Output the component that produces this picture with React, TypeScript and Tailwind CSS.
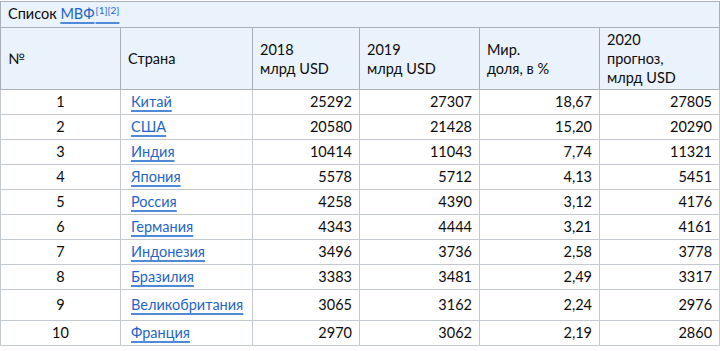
import React from "react";

const rows: [number, string, string, string, string, string][] = [
  [1, "Китай", "25292", "27307", "18,67", "27805"],
  [2, "США", "20580", "21428", "15,20", "20290"],
  [3, "Индия", "10414", "11043", "7,74", "11321"],
  [4, "Япония", "5578", "5712", "4,13", "5451"],
  [5, "Россия", "4258", "4390", "3,12", "4176"],
  [6, "Германия", "4343", "4444", "3,21", "4161"],
  [7, "Индонезия", "3496", "3736", "2,58", "3778"],
  [8, "Бразилия", "3383", "3481", "2,49", "3317"],
  [9, "Великобритания", "3065", "3162", "2,24", "2976"],
  [10, "Франция", "2970", "3062", "2,19", "2860"],
];

const link =
  "text-[#1f66c9] underline decoration-[#4f8ad9] decoration-2 underline-offset-[3px]";

export default function App() {
  return (
    <div className="w-[720px] h-[351px] bg-white font-['Lato','Open_Sans',sans-serif] text-[14.5px] text-[#0c0c0c] overflow-hidden">
      <table className="border-collapse table-fixed w-[719px] mt-px">
        <colgroup>
          <col className="w-[120px]" />
          <col className="w-[132px]" />
          <col className="w-[107px]" />
          <col className="w-[120px]" />
          <col className="w-[120px]" />
          <col className="w-[120px]" />
        </colgroup>
        <thead>
          <tr className="h-[26px] bg-[#eaf2fc]">
            <th
              colSpan={6}
              className="border border-[#a9b0b8] px-[7px] text-left font-normal leading-[18px]"
            >
              Список{" "}
              <span className={link}>
                МВФ
                <span className="text-[10px] align-baseline relative top-[-5px] ml-px">[1][2]</span>
              </span>
            </th>
          </tr>
          <tr className="h-[62px] bg-[#eaf2fc] leading-[19px]">
            <th className="border border-[#a9b0b8] px-[7px] text-left font-normal">№</th>
            <th className="border border-[#a9b0b8] px-[7px] text-left font-normal">Страна</th>
            <th className="border border-[#a9b0b8] px-[7px] text-left font-normal">
              2018
              <br />
              млрд USD
            </th>
            <th className="border border-[#a9b0b8] px-[7px] text-left font-normal">
              2019
              <br />
              млрд USD
            </th>
            <th className="border border-[#a9b0b8] px-[7px] text-left font-normal">
              Мир.
              <br />
              доля, в %
            </th>
            <th className="border border-[#a9b0b8] px-[7px] text-left font-normal">
              2020
              <br />
              прогноз,
              <br />
              млрд USD
            </th>
          </tr>
        </thead>
        <tbody>
          {rows.map((r) => (
            <tr key={r[0]} className={r[0] === 9 ? "h-[31px]" : "h-[25px]"}>
              <td className="border border-[#c4c9cf] text-center leading-[18px]">{r[0]}</td>
              <td className="border border-[#c4c9cf] pl-[10px] leading-[18px]">
                <span className={link}>{r[1]}</span>
              </td>
              <td className="border border-[#c4c9cf] pr-[7px] text-right leading-[18px]">{r[2]}</td>
              <td className="border border-[#c4c9cf] pr-[7px] text-right leading-[18px]">{r[3]}</td>
              <td className="border border-[#c4c9cf] pr-[7px] text-right leading-[18px]">{r[4]}</td>
              <td className="border border-[#c4c9cf] pr-[7px] text-right leading-[18px]">{r[5]}</td>
            </tr>
          ))}
        </tbody>
      </table>
    </div>
  );
}
